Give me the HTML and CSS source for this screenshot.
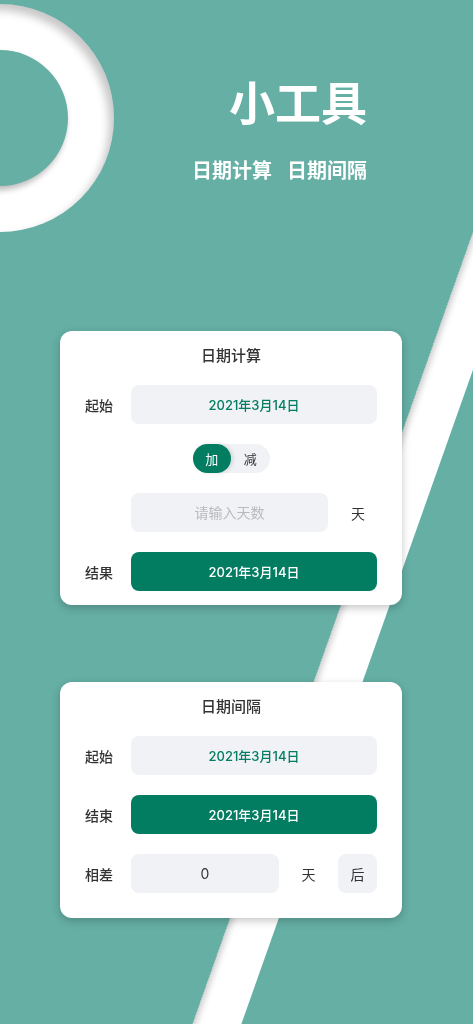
FILE: index.html
```html
<!doctype html>
<html>
    <head>
        <meta charset="UTF-8" />
        <title>小工具</title>
        <link rel="stylesheet" href="styles.css">
    </head>
    <body>
        <div class="backdrop">
            <div class="ring"></div>
            <div class="stripe"></div>
        </div>

        <header class="hero">
            <h1>小工具</h1>
            <p><span>日期计算</span><span class="sep">日期间隔</span></p>
        </header>

        <main class="cards">
            <section class="card card-calc">
                <h2>日期计算</h2>
                <div class="row">
                    <span class="label">起始</span>
                    <div class="field">2021年3月14日</div>
                </div>
                <div class="row row-center">
                    <div class="toggle">
                        <span class="opt on">加</span>
                        <span class="opt">减</span>
                    </div>
                </div>
                <div class="row">
                    <span class="label"></span>
                    <input class="field field-days" type="text" placeholder="请输入天数">
                    <span class="unit unit-calc">天</span>
                </div>
                <div class="row">
                    <span class="label">结果</span>
                    <div class="field field-green">2021年3月14日</div>
                </div>
            </section>

            <section class="card card-diff">
                <h2>日期间隔</h2>
                <div class="row">
                    <span class="label">起始</span>
                    <div class="field">2021年3月14日</div>
                </div>
                <div class="row">
                    <span class="label">结束</span>
                    <div class="field field-green">2021年3月14日</div>
                </div>
                <div class="row">
                    <span class="label">相差</span>
                    <div class="field field-count">0</div>
                    <span class="unit">天</span>
                    <div class="field field-btn">后</div>
                </div>
            </section>
        </main>
    </body>
</html>
```
FILE: styles.css
```css
:root {
    --teal: #65afa5;
    --green: #037d62;
    --field: #f1f2f6;
    --text: #333;
}

html, body {
    margin: 0;
    height: 100%;
}

body {
    position: relative;
    background-color: var(--teal);
    font-family: "Noto Sans CJK SC", "Noto Sans", sans-serif;
    color: var(--text);
    overflow: hidden;
}

/* background decoration */
.backdrop {
    position: fixed;
    inset: 0;
    overflow: hidden;
}

.ring {
    position: absolute;
    left: -114px;
    top: 4px;
    width: 228px;
    height: 228px;
    border-radius: 50%;
    background-color: #fff;
    box-shadow: inset -5px 6px 8px rgba(0, 0, 0, 0.22);
}

.ring::after {
    content: "";
    position: absolute;
    left: 46px;
    top: 46px;
    width: 136px;
    height: 136px;
    border-radius: 50%;
    background-color: var(--teal);
    box-shadow: -2px 4px 6px rgba(0, 0, 0, 0.28);
}

.stripe {
    position: absolute;
    left: 331px;
    top: 37px;
    width: 46px;
    height: 1200px;
    background-color: #fff;
    transform: rotate(19.5deg);
    box-shadow: inset 6px 0 6px -3px rgba(0, 0, 0, 0.2);
}

.hero {
    position: relative;
    padding: 77px 106px 0 0;
    text-align: right;
    color: #fff;
}

.hero h1 {
    margin: 0;
    font-size: 46px;
    line-height: 1;
    font-weight: bold;
}

.hero p {
    margin: 37px 0 0;
    font-size: 20px;
    line-height: 1;
    font-weight: bold;
}

.hero .sep {
    margin-left: 15px;
}

.cards {
    position: relative;
    display: flex;
    flex-direction: column;
    gap: 77px;
    padding: 151px 71px 0 60px;
}

.card {
    background-color: #fff;
    border-radius: 12px;
    padding: 14px 25px 14px;
    display: flex;
    flex-direction: column;
    gap: 20px;
    box-shadow: 0 3px 8px rgba(0, 0, 0, 0.22);
}

.card-diff {
    padding-bottom: 25px;
}

.card h2 {
    margin: 0;
    font-size: 15px;
    line-height: 20px;
    font-weight: 500;
    text-align: center;
    color: var(--text);
}

.row {
    display: flex;
    align-items: center;
}

.row-center {
    justify-content: center;
}

.label {
    width: 46px;
    flex-shrink: 0;
    font-size: 14px;
    font-weight: 500;
}

.field {
    flex: 1;
    height: 39px;
    border-radius: 8px;
    background-color: var(--field);
    display: flex;
    align-items: center;
    justify-content: center;
    font-family: Inter, "Noto Sans CJK SC", sans-serif;
    font-size: 13px;
    font-weight: 500;
    color: var(--green);
}

.field-green {
    background-color: var(--green);
    color: #fff;
}

.field-days {
    flex: none;
    width: 197px;
    box-sizing: border-box;
    border: none;
    outline: none;
    padding: 0;
    font-size: 14px;
    font-weight: normal;
    text-align: center;
}

.field-days::placeholder {
    color: #b9b9be;
}

.unit {
    flex: 1;
    text-align: center;
    font-size: 14px;
}

.unit-calc {
    padding-left: 11px;
}

.field-count {
    flex: none;
    width: 148px;
    font-size: 14px;
    color: var(--text);
    font-weight: normal;
}

.field-btn {
    flex: none;
    width: 39px;
    font-size: 14px;
    color: var(--text);
    font-weight: normal;
}

.toggle {
    display: flex;
    width: 77px;
    height: 29px;
    border-radius: 15px;
    background-color: var(--field);
}

.opt {
    flex: 1;
    display: flex;
    align-items: center;
    justify-content: center;
    border-radius: 15px;
    font-size: 13px;
}

.opt.on {
    background-color: var(--green);
    color: #fff;
    box-shadow: 2px 0 4px rgba(0, 0, 0, 0.12);
}
```
